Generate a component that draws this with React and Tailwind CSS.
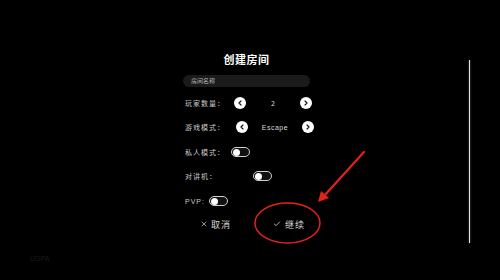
import React from 'react';
import { ChevronLeft, ChevronRight, X, Check } from 'lucide-react';

const font = { fontFamily: '"Noto Sans CJK SC", "Noto Sans", sans-serif' };

function ArrowButton({ dir }) {
  const Icon = dir === 'left' ? ChevronLeft : ChevronRight;
  return (
    <div className="w-[12px] h-[12px] shrink-0 rounded-full bg-white flex items-center justify-center">
      <Icon size={8} strokeWidth={3.5} color="#111" />
    </div>
  );
}

function Toggle() {
  return (
    <div className="w-[19px] h-[10px] rounded-full border border-[#cfcfcf] bg-[#111] flex items-center px-[1px]">
      <div className="w-[7px] h-[7px] rounded-full bg-white" />
    </div>
  );
}

function Label({ children }) {
  return <span className="shrink-0 whitespace-nowrap text-[7px] leading-none text-[#c8c8c8] tracking-[1px]">{children}</span>;
}

export default function App() {
  return (
    <div className="relative w-[500px] h-[280px] bg-black overflow-hidden" style={font}>
      <div className="flex flex-col pt-[52px] ml-[183px] w-[140px]">
        <div className="h-[14px] w-[130px] flex items-center justify-center pr-[3px]">
          <span className="text-[11px] font-bold text-white leading-none tracking-[0.5px]">创建房间</span>
        </div>

        <div className="mt-[9px] h-[12px] w-[127px] rounded-full bg-[#1b1b1b] flex items-center pl-[8px]">
          <span className="text-[6px] leading-none text-[#b5b5b5]">房间名称</span>
        </div>

        <div className="mt-[9px] h-[14px] flex items-center pl-[2px]">
          <Label>玩家数量：</Label>
          <div className="ml-[9px] w-[78px] shrink-0 flex items-center justify-between">
            <ArrowButton dir="left" />
            <span className="text-[7px] text-[#d8d8d8] leading-none">2</span>
            <ArrowButton dir="right" />
          </div>
        </div>

        <div className="mt-[10px] h-[14px] flex items-center pl-[2px]">
          <Label>游戏模式：</Label>
          <div className="ml-[11px] w-[78px] shrink-0 flex items-center justify-between">
            <ArrowButton dir="left" />
            <span className="text-[7px] text-[#d8d8d8] leading-none tracking-[0.5px]" style={{ fontFamily: '"Liberation Sans", sans-serif' }}>Escape</span>
            <ArrowButton dir="right" />
          </div>
        </div>

        <div className="mt-[11px] h-[14px] flex items-center pl-[2px]">
          <Label>私人模式：</Label>
          <div className="ml-[6px]">
            <Toggle />
          </div>
        </div>

        <div className="mt-[10px] h-[14px] flex items-center pl-[2px]">
          <Label>对讲机：</Label>
          <div className="ml-[36px]">
            <Toggle />
          </div>
        </div>

        <div className="mt-[11px] h-[14px] flex items-center pl-[2px]">
          <span className="text-[7px] leading-none text-[#c8c8c8] tracking-[1px]" style={{ fontFamily: '"Liberation Sans", sans-serif' }}>PVP:</span>
          <div className="ml-[4px]">
            <Toggle />
          </div>
        </div>

        <div className="mt-[9px] h-[14px] flex items-center pl-[17px]">
          <div className="flex items-center gap-[3px] text-[#d6d6d6]">
            <X size={8} strokeWidth={2} />
            <span className="text-[9px] leading-none tracking-[1px]">取消</span>
          </div>
          <div className="ml-[42px] flex items-center gap-[4px] text-[#d6d6d6]">
            <Check size={8} strokeWidth={2.5} />
            <span className="text-[9px] leading-none tracking-[1px]">继续</span>
          </div>
        </div>
      </div>

      <div className="absolute left-[469px] top-[60px] w-[1px] h-[183px] bg-[#e0e0e0] shadow-[0_0_2px_rgba(255,255,255,0.5)]" />

      <span className="absolute left-[30px] top-[254px] text-[7px] text-[#1c1c1c]" style={{ fontFamily: '"Liberation Sans", sans-serif' }}>UGPA</span>

      <svg className="absolute inset-0" width="500" height="280" viewBox="0 0 500 280">
        <ellipse cx="287.5" cy="223" rx="32.5" ry="20" fill="none" stroke="#e3221b" strokeWidth="1.5" />
        <line x1="364" y1="152" x2="324" y2="196" stroke="#e3221b" strokeWidth="2.2" strokeLinecap="round" />
        <polygon points="318,202 321,191 329,198" fill="#e3221b" />
      </svg>
    </div>
  );
}
